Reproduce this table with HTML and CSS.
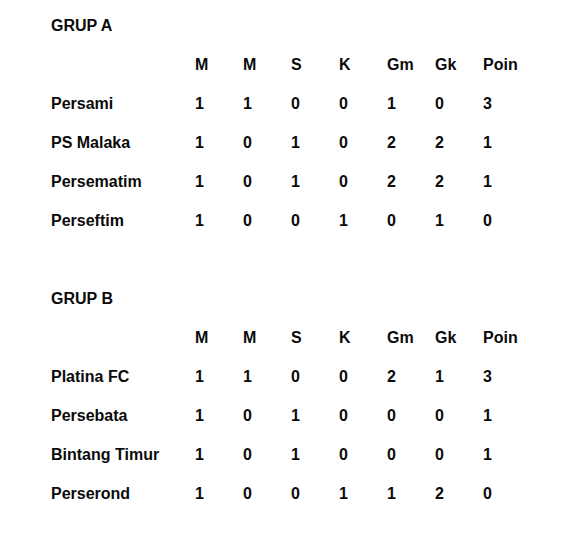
FILE: index.html
```html
<!DOCTYPE html>
<html>
<head>
<meta charset="utf-8">
<link rel="stylesheet" href="styles.css">
</head>
<body>
<div class="page">
  <section class="group">
    <div class="title">GRUP A</div>
    <div></div><div>M</div><div>M</div><div>S</div><div>K</div><div>Gm</div><div>Gk</div><div>Poin</div>
    <div>Persami</div><div>1</div><div>1</div><div>0</div><div>0</div><div>1</div><div>0</div><div>3</div>
    <div>PS Malaka</div><div>1</div><div>0</div><div>1</div><div>0</div><div>2</div><div>2</div><div>1</div>
    <div>Persematim</div><div>1</div><div>0</div><div>1</div><div>0</div><div>2</div><div>2</div><div>1</div>
    <div>Perseftim</div><div>1</div><div>0</div><div>0</div><div>1</div><div>0</div><div>1</div><div>0</div>
  </section>
  <section class="group group-b">
    <div class="title">GRUP B</div>
    <div></div><div>M</div><div>M</div><div>S</div><div>K</div><div>Gm</div><div>Gk</div><div>Poin</div>
    <div>Platina FC</div><div>1</div><div>1</div><div>0</div><div>0</div><div>2</div><div>1</div><div>3</div>
    <div>Persebata</div><div>1</div><div>0</div><div>1</div><div>0</div><div>0</div><div>0</div><div>1</div>
    <div>Bintang Timur</div><div>1</div><div>0</div><div>1</div><div>0</div><div>0</div><div>0</div><div>1</div>
    <div>Perserond</div><div>1</div><div>0</div><div>0</div><div>1</div><div>1</div><div>2</div><div>0</div>
  </section>
</div>
</body>
</html>
```
FILE: styles.css
```css
html, body {
  margin: 0;
  padding: 0;
  background: #ffffff;
}
body {
  font-family: "Liberation Sans", Arial, sans-serif;
  font-weight: bold;
  font-size: 16px;
  color: #0a0a0a;
}
.page {
  padding: 6px 0 0 51px;
}
.group {
  display: grid;
  grid-template-columns: 144px repeat(7, 48px);
  grid-auto-rows: 39px;
  line-height: 39px;
}
.group > div {
  white-space: nowrap;
}
.title {
  grid-column: 1 / -1;
}
.group-b {
  margin-top: 39px;
}
```
